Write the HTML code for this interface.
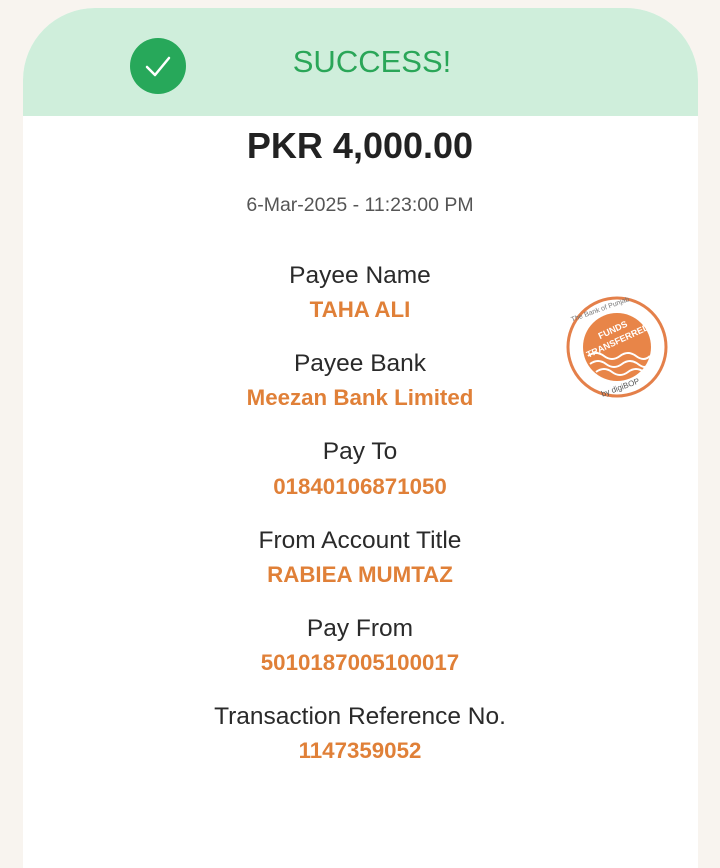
<!DOCTYPE html>
<html><head><style>
body{margin:0;width:720px;height:847px;background:#f8f4ef;position:relative;overflow:hidden;font-family:"Liberation Sans",sans-serif}
.card{position:absolute;left:23px;top:8px;width:675px;height:860px;background:#fff;border-radius:72px 72px 0 0;overflow:hidden}
.hd{position:absolute;left:0;top:0;width:100%;height:108px;background:#cfeedb}
.t{position:absolute;left:0;width:720px;text-align:center;white-space:nowrap}
.l{font-size:24.5px;color:#2a2a2a}
.v{font-size:22.3px;font-weight:bold;color:#e08038}
</style></head><body>
<div class="card"><div class="hd"></div></div>
<svg style="position:absolute;left:129px;top:37px" width="58" height="58"><circle cx="29" cy="29" r="28" fill="#27a85a"/><path d="M18 30 L26 38 L40 21" stroke="#fff" stroke-width="2.5" fill="none" stroke-linecap="round" stroke-linejoin="round"/></svg>
<div class="t" style="top:44px;left:12px;font-size:31px;color:#2aa658">SUCCESS!</div>
<div class="t" style="top:125px;font-size:36px;font-weight:bold;color:#222">PKR 4,000.00</div>
<div class="t" style="top:194px;font-size:19.5px;color:#555">6-Mar-2025 - 11:23:00 PM</div>
<div class="t l" style="top:262px">Payee Name</div>
<div class="t v" style="top:297px">TAHA ALI</div>
<div class="t l" style="top:350px">Payee Bank</div>
<div class="t v" style="top:385px">Meezan Bank Limited</div>
<div class="t l" style="top:438px">Pay To</div>
<div class="t v" style="top:474px">01840106871050</div>
<div class="t l" style="top:527px">From Account Title</div>
<div class="t v" style="top:562px">RABIEA MUMTAZ</div>
<div class="t l" style="top:615px">Pay From</div>
<div class="t v" style="top:650px">5010187005100017</div>
<div class="t l" style="top:703px">Transaction Reference No.</div>
<div class="t v" style="top:738px">1147359052</div>
<svg style="position:absolute;left:564px;top:294px" width="106" height="106">
<circle cx="53" cy="53" r="49" fill="#fff" stroke="#e4804a" stroke-width="3"/>
<circle cx="53" cy="53" r="34" fill="#e88548"/>
<path d="M24 62 q8 -6 16 0 t16 0 t16 0 t14 0 M26 70 q8 -6 16 0 t16 0 t16 0 t10 0 M32 78 q8 -6 16 0 t16 0 t16 0" stroke="#fff" stroke-width="2" fill="none"/>
<text x="53" y="38" font-size="9" fill="#fff" font-weight="bold" text-anchor="middle" transform="rotate(-25 53 45)">FUNDS</text>
<text x="53" y="50" font-size="9" fill="#fff" font-weight="bold" text-anchor="middle" transform="rotate(-25 53 45)">TRANSFERRED</text>
<text x="55" y="97" font-size="8" fill="#555" text-anchor="middle" transform="rotate(-20 53 90)">by digiBOP</text>
<text x="50" y="14" font-size="7" fill="#777" text-anchor="middle" transform="rotate(-20 53 53)">The Bank of Punjab</text>
</svg>
</body></html>
